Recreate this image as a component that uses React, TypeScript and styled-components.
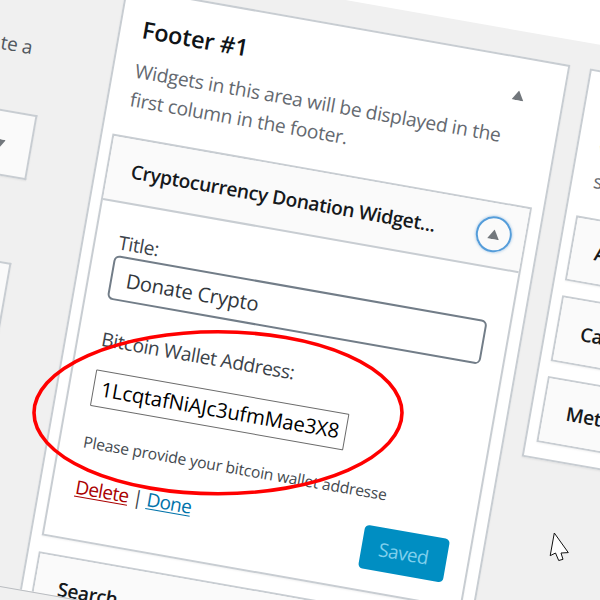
import React from "react";
import styled, { createGlobalStyle } from "styled-components";

const Global = createGlobalStyle`
  * { box-sizing: border-box; }
  body { margin: 0; background: #f0f0f1; overflow: hidden; }
`;

const Frame = styled.div`
  position: relative;
  width: 600px;
  height: 600px;
  overflow: hidden;
  background: #f0f0f0;
  font-family: "Open Sans", "Noto Sans", sans-serif;
  color: #3c434a;
`;

const Plane = styled.div`
  width: 820px;
  height: 760px;
  display: flex;
  flex-direction: column;
  transform-origin: 0 0;
  transform: rotate(10deg) translateY(-110px);
`;

const TopBar = styled.div`
  height: 50px;
  flex: none;
  background: #fff;
`;

const Content = styled.div`
  height: 637px;
  flex: none;
  overflow: hidden;
  display: flex;
  align-items: flex-start;
`;

const StatusBar = styled.div`
  flex: 1;
  border-top: 1px solid #b9bcc0;
  background: #f0f0f0;
`;

const Available = styled.aside`
  width: 57px;
  flex: none;
  display: flex;
  flex-direction: column;
  margin-right: 65px;
`;

const Intro = styled.p`
  margin: 86px 17px 0 0;
  height: 81px;
  line-height: 30px;
  font-size: 19px;
  letter-spacing: -0.3px;
  text-align: right;
  white-space: nowrap;
  color: #50575e;
`;

const AvailableBox = styled.div<{ $height: number }>`
  height: ${(p) => p.$height}px;
  margin-bottom: 84px;
  border: 2px solid #c8cdd2;
  border-left: 0;
  background: #fafafa;
  box-shadow: 0 1px 2px rgba(0, 0, 0, 0.06);
  display: flex;
  justify-content: flex-end;
  padding: 28px 25px 0 0;
`;

const Area = styled.section<{ $height: number }>`
  width: 451px;
  height: ${(p) => p.$height}px;
  flex: none;
  margin: 25px 19.5px 0 0;
  padding: 0 11px 0 10px;
  border: 2px solid #c8cdd2;
  background: #fff;
  box-shadow: 0 1px 2px rgba(0, 0, 0, 0.06);
`;

const AreaHead = styled.header`
  height: 144.5px;
  padding: 18.5px 0 0 11.5px;
`;

const AreaTitleRow = styled.div`
  height: 47px;
  display: flex;
  justify-content: space-between;
  padding-right: 27px;
`;

const AreaTitle = styled.h2`
  margin: 0;
  font-size: 23.5px;
  line-height: 37px;
  font-weight: 600;
  letter-spacing: -0.2px;
  color: #101418;
`;

const AreaToggle = styled.span`
  padding-top: 13px;
  line-height: 0;
`;

const AreaNote = styled.p`
  margin: -2px 0 0 0;
  width: 400px;
  font-size: 19.2px;
  line-height: 29px;
  letter-spacing: -0.28px;
  color: #646970;
  white-space: nowrap;
`;

const Widget = styled.article<{ $open?: boolean }>`
  height: ${(p) => (p.$open ? "408.5px" : "66.5px")};
  margin-bottom: ${(p) => (p.$open ? "15.5px" : "15.3px")};
  border: 2px solid #c8cdd2;
  background: #fff;
  box-shadow: 0 1px 2px rgba(0, 0, 0, 0.05);
`;

const WidgetHead = styled.div<{ $open?: boolean }>`
  height: ${(p) => (p.$open ? "65px" : "62.5px")};
  padding: 0 13.5px 0 23px;
  display: flex;
  align-items: center;
  justify-content: space-between;
  background: #fafafa;
  border-bottom: ${(p) => (p.$open ? "2px solid #c8cdd2" : "0")};
`;

const WidgetTitle = styled.h3`
  margin: 2px 0 0;
  font-size: 19.2px;
  line-height: 28px;
  font-weight: 600;
  letter-spacing: -0.33px;
  color: #16191c;
  white-space: nowrap;
`;

const FocusRing = styled.span`
  width: 36px;
  height: 36px;
  border-radius: 50%;
  border: 2px solid #559dda;
  box-shadow: 0 0 3px rgba(79, 148, 212, 0.6);
  display: flex;
  align-items: center;
  justify-content: center;
  line-height: 0;
`;

const Form = styled.form`
  height: 340px;
  padding: 24px 21px 0 21px;
  display: flex;
  flex-direction: column;
  align-items: flex-start;
`;

const Label = styled.label`
  height: 28px;
  line-height: 29px;
  font-size: 19.2px;
  padding-left: 2px;
  letter-spacing: -0.39px;
  white-space: nowrap;
`;

const TitleField = styled.div`
  width: 379px;
  height: 45px;
  margin-bottom: 25px;
  padding-left: 14px;
  border: 2px solid #727d88;
  border-radius: 6px;
  font-size: 20.2px;
  line-height: 42px;
  letter-spacing: -0.2px;
  color: #32373c;
`;

const AddressField = styled.div`
  width: 257px;
  height: 37px;
  margin: 18.5px 0 0 2px;
  padding-left: 7px;
  border: 1px solid #6c6c6c;
  border-radius: 1px;
  font-size: 20.3px;
  line-height: 34px;
  letter-spacing: -0.07px;
  color: #000;
  white-space: nowrap;
`;

const Hint = styled.p`
  margin: 22.5px 0 0 2px;
  height: 26px;
  line-height: 26px;
  font-size: 15.7px;
  letter-spacing: -0.2px;
  color: #444a50;
  white-space: nowrap;
`;

const Actions = styled.div`
  width: 379.5px;
  display: flex;
  justify-content: space-between;
  align-items: flex-start;
  padding-top: 20px;
`;

const Links = styled.div`
  margin: -1px 0 0 2px;
  font-size: 19px;
  line-height: 28px;
  letter-spacing: -0.6px;
  white-space: pre;
`;

const Link = styled.a<{ $color: string }>`
  color: ${(p) => p.$color};
  text-decoration: underline;
  text-decoration-thickness: 1.3px;
  text-underline-offset: 2px;
`;

const SaveButton = styled.button`
  width: 86px;
  height: 44.5px;
  padding: 0;
  border: 0;
  border-radius: 4.5px;
  background: #008ec2;
  color: #7fcfec;
  font: inherit;
  font-size: 19px;
  letter-spacing: -0.5px;
`;

const Overlay = styled.svg`
  position: absolute;
  left: 0;
  top: 0;
  pointer-events: none;
`;

const Triangle = ({ down }: { down?: boolean }) => (
  <svg width="12" height="10" viewBox="0 0 12 10">
    <path d={down ? "M0 0H12L6 10Z" : "M0 10H12L6 0Z"} fill="#72777c" />
  </svg>
);

const ClosedWidget = ({ title }: { title: string }) => (
  <Widget>
    <WidgetHead>
      <WidgetTitle>{title}</WidgetTitle>
    </WidgetHead>
  </Widget>
);

export default function App() {
  return (
    <Frame>
      <Global />
      <Plane>
        <TopBar />
        <Content>
          <Available>
            <Intro>te a</Intro>
            <AvailableBox $height={66}>
              <Triangle down />
            </AvailableBox>
            <AvailableBox $height={476} />
          </Available>

          <Area $height={700}>
            <AreaHead>
              <AreaTitleRow>
                <AreaTitle>Footer #1</AreaTitle>
                <AreaToggle>
                  <Triangle />
                </AreaToggle>
              </AreaTitleRow>
              <AreaNote>
                Widgets in this area will be displayed in the
                <br />
                first column in the footer.
              </AreaNote>
            </AreaHead>

            <Widget $open>
              <WidgetHead $open>
                <WidgetTitle>Cryptocurrency Donation Widget...</WidgetTitle>
                <FocusRing>
                  <Triangle />
                </FocusRing>
              </WidgetHead>
              <Form>
                <Label>Title:</Label>
                <TitleField>Donate Crypto</TitleField>
                <Label>Bitcoin Wallet Address:</Label>
                <AddressField>1LcqtafNiAJc3ufmMae3X8</AddressField>
                <Hint>Please provide your bitcoin wallet addresse</Hint>
                <Actions>
                  <Links>
                    <Link $color="#a00">Delete</Link> |{" "}
                    <Link $color="#0073aa">Done</Link>
                  </Links>
                  <SaveButton type="button">Saved</SaveButton>
                </Actions>
              </Form>
            </Widget>

            <ClosedWidget title="Search" />
          </Area>

          <Area $height={393.5}>
            <AreaHead>
              <AreaTitleRow>
                <AreaTitle>Footer #2</AreaTitle>
              </AreaTitleRow>
              <AreaNote>
                Widgets in this area will be displayed in the
                <br />
                second column in the footer.
              </AreaNote>
            </AreaHead>
            <ClosedWidget title="Archives" />
            <ClosedWidget title="Categories" />
            <ClosedWidget title="Meta" />
          </Area>
        </Content>
        <StatusBar />
      </Plane>

      <Overlay width="600" height="600" viewBox="0 0 600 600">
        <ellipse cx="218" cy="412.8" rx="184" ry="81" fill="none" stroke="#f00" strokeWidth="3.6" />
        <path
          d="M554.3 533L550.2 555.7L555.5 553L558.7 560.5L563 559.3L561 553L568.3 552.6Z"
          fill="#fff"
          stroke="#111"
          strokeWidth="1"
        />
      </Overlay>
    </Frame>
  );
}
